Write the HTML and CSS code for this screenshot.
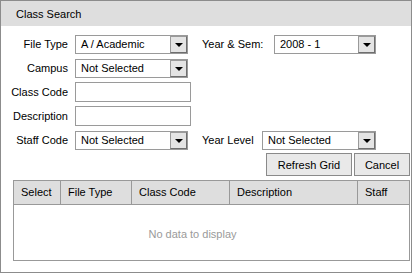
FILE: index.html
```html
<!DOCTYPE html>
<html>
<head>
<meta charset="utf-8">
<link rel="stylesheet" href="styles.css">
</head>
<body>
<div class="panel">
  <div class="title">Class Search</div>
  <div class="form">
    <div class="row">
      <span class="lbl">File Type</span>
      <div class="sel w113"><span class="val">A / Academic</span><span class="drop"><i class="tri"></i></span></div>
      <span class="lbl2 w72">Year &amp; Sem:</span>
      <div class="sel w102"><span class="val">2008 - 1</span><span class="drop"><i class="tri"></i></span></div>
    </div>
    <div class="row">
      <span class="lbl">Campus</span>
      <div class="sel w113"><span class="val">Not Selected</span><span class="drop"><i class="tri"></i></span></div>
    </div>
    <div class="row">
      <span class="lbl">Class Code</span>
      <div class="inp"></div>
    </div>
    <div class="row">
      <span class="lbl">Description</span>
      <div class="inp"></div>
    </div>
    <div class="row">
      <span class="lbl">Staff Code</span>
      <div class="sel w113"><span class="val">Not Selected</span><span class="drop"><i class="tri"></i></span></div>
      <span class="lbl2 w60">Year Level</span>
      <div class="sel w114"><span class="val">Not Selected</span><span class="drop"><i class="tri"></i></span></div>
    </div>
  </div>
  <div class="actions">
    <button class="btn refresh">Refresh Grid</button>
    <button class="btn cancel">Cancel</button>
  </div>
  <div class="grid">
    <div class="ghead">
      <div class="gc c1">Select</div>
      <div class="gc c2">File Type</div>
      <div class="gc c3">Class Code</div>
      <div class="gc c4">Description</div>
      <div class="gc c5">Staff</div>
    </div>
    <div class="gbody">No data to display</div>
  </div>
</div>
</body>
</html>
```
FILE: styles.css
```css
html, body {
  margin: 0;
  padding: 0;
  background: #fff;
}
body {
  font-family: "Liberation Sans", Arial, sans-serif;
  font-size: 11px;
  color: #000;
}
.panel {
  box-sizing: border-box;
  width: 412px;
  height: 273px;
  border: 1px solid #8c8c8c;
  background: #fff;
}
.title {
  height: 25px;
  line-height: 26px;
  padding-left: 15px;
  background: #dedede;
  font-size: 11px;
}
.form {
  padding-top: 6px;
  display: flex;
  flex-direction: column;
}
.row {
  height: 24px;
  display: flex;
  align-items: center;
}
.lbl {
  width: 67px;
  text-align: right;
  margin-right: 7px;
}
.lbl2 {
  margin-left: 14px;
}
.w72 { width: 72px; }
.w60 { width: 60px; }
.sel {
  box-sizing: border-box;
  height: 19px;
  border: 1px solid #9a9a9a;
  display: flex;
  align-items: center;
  justify-content: space-between;
  background: #fff;
}
.w113 { width: 113px; }
.w102 { width: 102px; }
.w114 { width: 114px; }
.val {
  padding-left: 5px;
  white-space: nowrap;
  margin-top: -1px;
}
.drop {
  box-sizing: border-box;
  width: 17px;
  height: 17px;
  border: 1px solid #6e6e6e;
  border-top-color: #9a9a9a;
  border-left-color: #9a9a9a;
  background: #e4e4e4;
  display: flex;
  align-items: center;
  justify-content: center;
}
.tri {
  width: 0;
  height: 0;
  border-left: 4px solid transparent;
  border-right: 4px solid transparent;
  border-top: 4px solid #000;
  margin-top: 2px;
}
.inp {
  box-sizing: border-box;
  width: 116px;
  height: 20px;
  border: 1px solid #9a9a9a;
  background: #fff;
}
.actions {
  display: flex;
  justify-content: flex-end;
  gap: 2px;
  padding-right: 1px;
  margin-top: 1px;
  height: 24px;
}
.btn {
  box-sizing: border-box;
  height: 23px;
  border: 1px solid #8a8a8a;
  background: #e9e9e9;
  font-family: "Liberation Sans", Arial, sans-serif;
  font-size: 11px;
  color: #000;
  padding: 0;
  margin: 0;
}
.refresh { width: 86px; }
.cancel { width: 56px; }
.grid {
  box-sizing: border-box;
  margin: 3px 1px 0 12px;
  width: 397px;
  height: 81px;
  border: 1px solid #999;
  display: flex;
  flex-direction: column;
}
.ghead {
  display: flex;
  height: 24px;
  box-sizing: border-box;
  border-bottom: 1px solid #999;
  background: #dedede;
}
.gc {
  box-sizing: border-box;
  padding-left: 7px;
  line-height: 23px;
  border-right: 1px solid #999;
}
.c1 { width: 47px; }
.c2 { width: 71px; }
.c3 { width: 98px; }
.c4 { width: 128px; }
.c5 { flex: 1; border-right: none; }
.gbody {
  flex: 1;
  display: flex;
  align-items: center;
  justify-content: center;
  padding-right: 38px;
  padding-top: 3px;
  color: #9a9a9a;
}
```
